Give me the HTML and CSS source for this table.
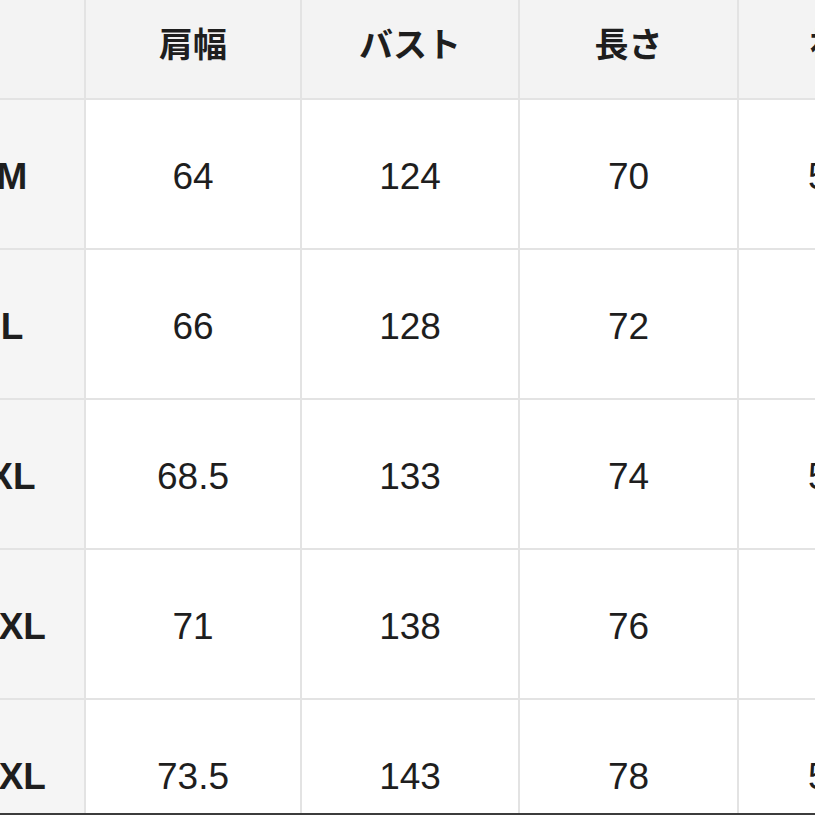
FILE: index.html
```html
<!DOCTYPE html>
<html lang="ja">
<head>
<meta charset="utf-8">
<title>サイズ表</title>
<link rel="stylesheet" href="styles.css">
</head>
<body>
<div class="frame">
  <div class="chart">
    <div class="cell head corner"></div>
    <div class="cell head">肩幅</div>
    <div class="cell head">バスト</div>
    <div class="cell head">長さ</div>
    <div class="cell head">袖丈</div>

    <div class="cell size">M</div>
    <div class="cell">64</div>
    <div class="cell">124</div>
    <div class="cell">70</div>
    <div class="cell">57.5</div>

    <div class="cell size">L</div>
    <div class="cell">66</div>
    <div class="cell">128</div>
    <div class="cell">72</div>
    <div class="cell">58</div>

    <div class="cell size">XL</div>
    <div class="cell">68.5</div>
    <div class="cell">133</div>
    <div class="cell">74</div>
    <div class="cell">58.5</div>

    <div class="cell size">2XL</div>
    <div class="cell">71</div>
    <div class="cell">138</div>
    <div class="cell">76</div>
    <div class="cell">59</div>

    <div class="cell size">3XL</div>
    <div class="cell">73.5</div>
    <div class="cell">143</div>
    <div class="cell">78</div>
    <div class="cell">59.5</div>
  </div>
</div>
</body>
</html>
```

FILE: styles.css
```css
html, body {
  margin: 0;
  padding: 0;
  background: #ffffff;
}

.frame {
  width: 815px;
  height: 813px;
  overflow: hidden;
  border-bottom: 2px solid #3c3c3c;
}

.chart {
  display: grid;
  grid-template-columns: 148px 214px 216px 217px 210px;
  grid-template-rows: 98px repeat(5, 148px);
  gap: 2px;
  background: #e3e3e3;
  margin-left: -64px;
  width: max-content;
  font-family: "Liberation Sans", Arial, "Noto Sans CJK JP", sans-serif;
  color: #1e1e1e;
}

.cell {
  display: flex;
  align-items: center;
  justify-content: center;
  background: #ffffff;
  font-size: 37px;
  line-height: 1;
  padding-top: 4px;
  box-sizing: border-box;
}

.head {
  background: #f3f3f3;
  font-family: "Noto Sans CJK JP", "Liberation Sans", sans-serif;
  font-weight: 700;
  font-size: 34px;
  padding-top: 0;
  padding-bottom: 12px;
}

.size {
  background: #f5f5f5;
  font-weight: 700;
  padding-left: 4px;
}
```
